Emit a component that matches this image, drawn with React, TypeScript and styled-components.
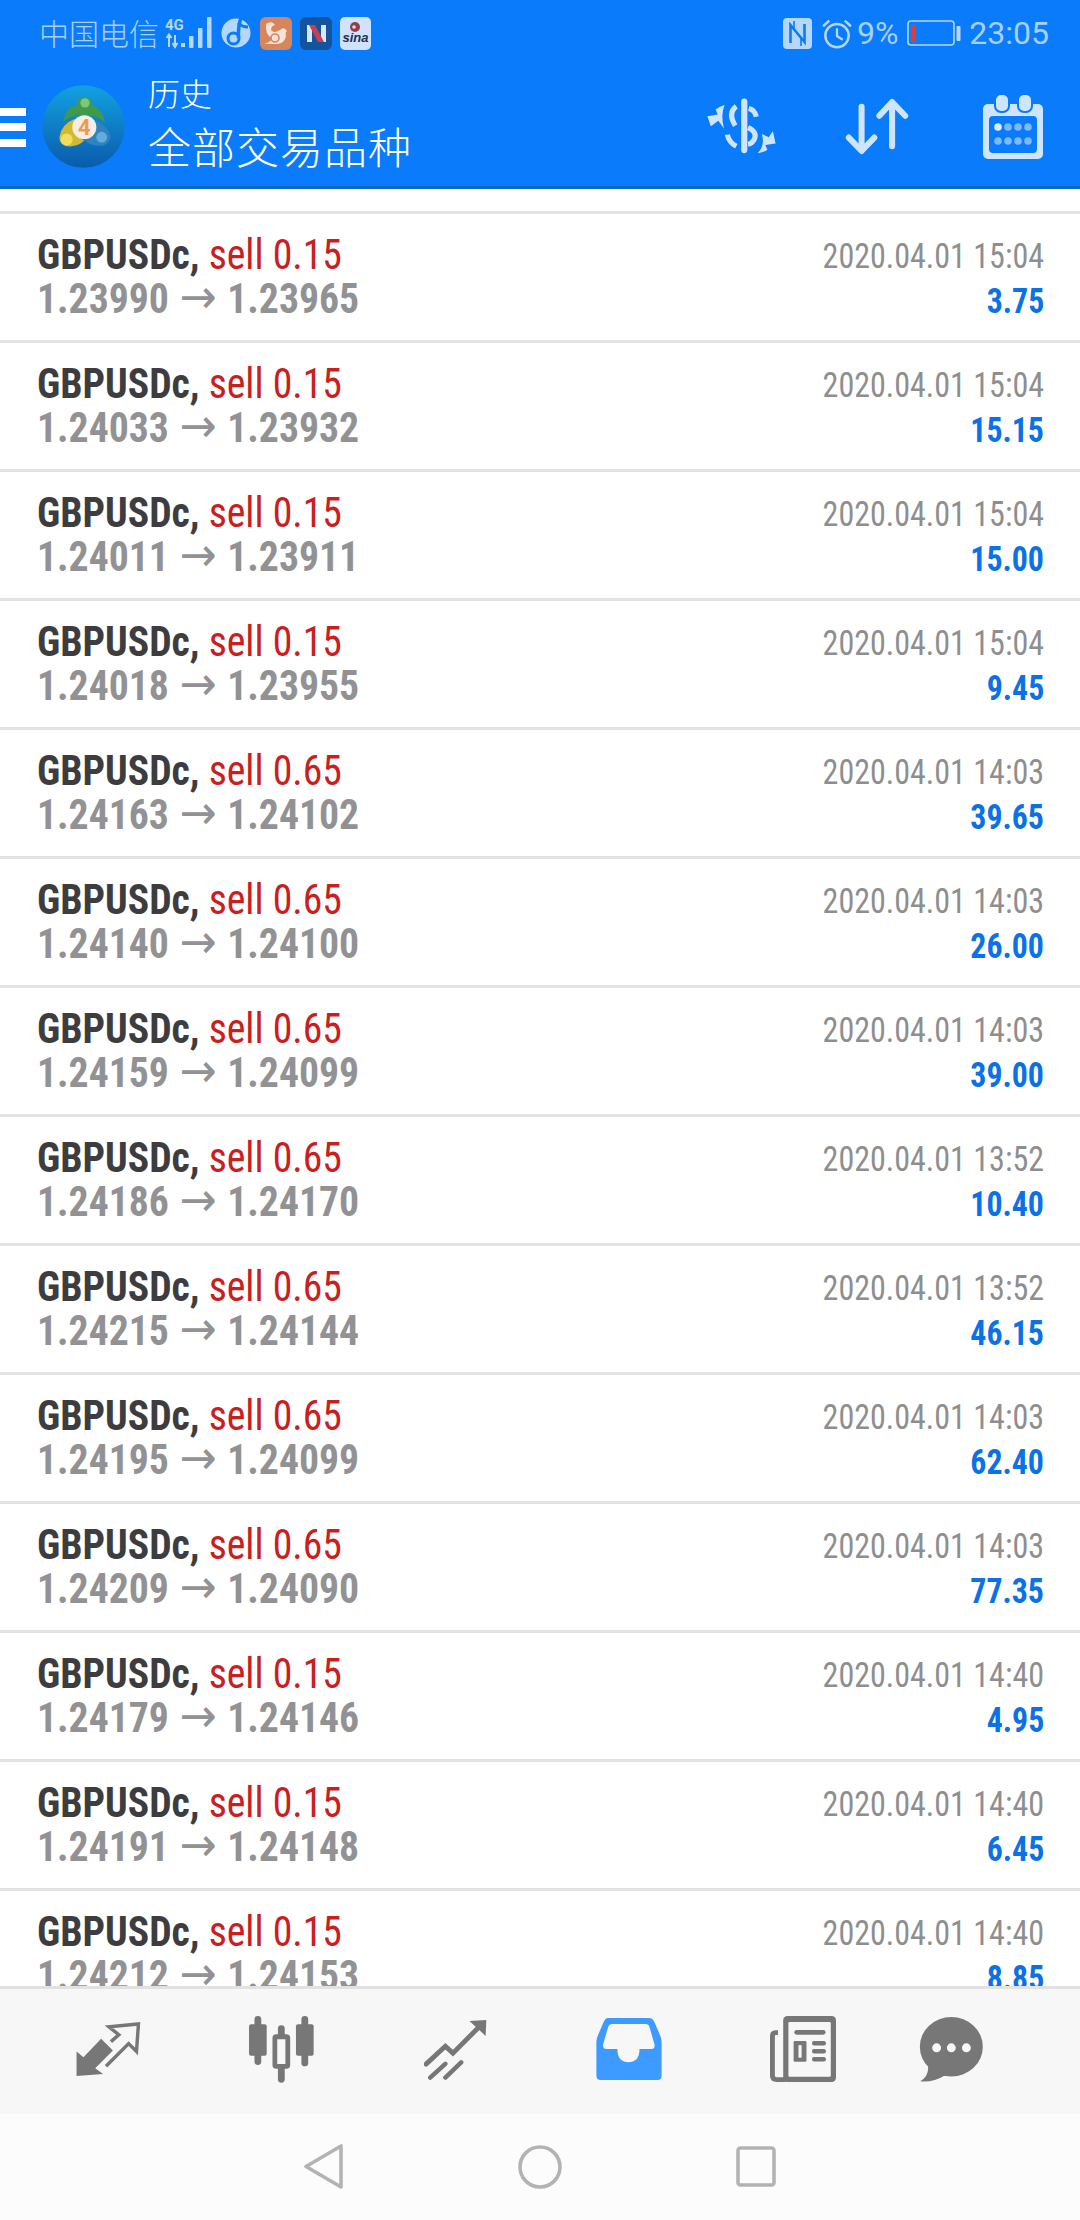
import React from "react";
import styled, { createGlobalStyle } from "styled-components";

const Global = createGlobalStyle`
  html, body { margin: 0; padding: 0; width: 1080px; height: 2220px; overflow: hidden; background: #fff; }
  * { box-sizing: border-box; }
`;

const Page = styled.div`
  width: 1080px;
  height: 2220px;
  display: flex;
  flex-direction: column;
  font-family: Roboto, "Noto Sans CJK SC", sans-serif;
  overflow: hidden;
`;

const TopArea = styled.header`
  height: 189px;
  flex: none;
  background: #0a7bfa;
  border-bottom: 3px solid #0b66c4;
  display: flex;
  flex-direction: column;
`;

const StatusBar = styled.div`
  height: 66px;
  display: flex;
  align-items: center;
  justify-content: space-between;
  padding: 0 31px 0 39px;
  color: #a8d0fd;
`;

const StatusGroup = styled.div`
  display: flex;
  align-items: center;
`;

const Carrier = styled.span`
  font-family: "Noto Sans CJK SC", sans-serif;
  font-size: 30px;
  font-weight: 300;
  line-height: 34px;
  margin-top: -3px;
`;

const StatusText = styled.span<{ $ml?: number }>`
  font-family: Roboto, sans-serif;
  font-size: 32px;
  line-height: 34px;
  margin-left: ${(p) => p.$ml ?? 0}px;
`;

const Icon = styled.svg<{ $ml?: number }>`
  display: block;
  flex: none;
  margin-left: ${(p) => p.$ml ?? 0}px;
`;

const Toolbar = styled.div`
  flex: 1;
  display: flex;
  align-items: center;
  padding-right: 37px;
`;

const Burger = styled.div`
  width: 26px;
  height: 39px;
  margin-top: 2px;
  display: flex;
  flex-direction: column;
  justify-content: space-between;
`;
const BurgerBar = styled.span`
  height: 8px;
  background: #fff;
`;

const Titles = styled.div`
  display: flex;
  flex-direction: column;
  margin-left: 23px;
  color: #fff;
  font-family: "Noto Sans CJK SC", sans-serif;
  font-weight: 300;
`;
const Title1 = styled.div`
  font-size: 32px;
  line-height: 42px;
  margin-top: -6px;
`;
const Title2 = styled.div`
  font-size: 43px;
  line-height: 60px;
  letter-spacing: 1px;
  margin-top: 2px;
`;
const ToolIcons = styled.div`
  margin-left: auto;
  display: flex;
  align-items: center;
`;

const List = styled.main`
  flex: 1;
  min-height: 0;
  overflow: hidden;
  background: #fff;
  padding-top: 22px;
`;

const Row = styled.div`
  height: 129px;
  border-top: 3px solid #e2e2e2;
  padding: 20px 36px 0 37px;
  display: flex;
  justify-content: space-between;
`;
const Col = styled.div<{ $right?: boolean }>`
  display: flex;
  flex-direction: column;
  align-items: ${(p) => (p.$right ? "flex-end" : "flex-start")};
  font-stretch: 75%;
`;
const LineOne = styled.div`
  font-size: 42px;
  line-height: 42px;
  white-space: nowrap;
  transform: scaleX(0.945);
  transform-origin: left center;
`;
const Symbol = styled.span`
  font-weight: 700;
  color: #3d3d3f;
`;
const Side = styled.span`
  color: #c9201f;
`;
const LineTwo = styled.div`
  font-size: 42px;
  line-height: 46px;
  font-weight: 700;
  color: #929295;
  white-space: nowrap;
  transform: scaleX(0.945);
  transform-origin: left center;
`;
const Arrow = styled.span`
  font-family: "DejaVu Sans", sans-serif;
  font-weight: 400;
  font-stretch: normal;
  font-size: 47px;
  line-height: 0;
  margin: 0 1.5px;
`;
const DateText = styled.div`
  font-size: 35px;
  line-height: 45px;
  color: #8e8e90;
  white-space: nowrap;
  transform: scaleX(0.915);
  transform-origin: right center;
`;
const Profit = styled.div`
  font-size: 35px;
  line-height: 45px;
  font-weight: 700;
  color: #0a72e6;
  transform: scaleX(0.91);
  transform-origin: right center;
`;

const TabBar = styled.nav`
  height: 128px;
  flex: none;
  background: #f7f7f7;
  border-top: 3px solid #e2e2e2;
  padding: 0 68px 5px 20px;
  display: grid;
  grid-template-columns: repeat(5, 174px) 1fr;
  align-items: center;
  justify-items: center;
`;
const SystemBar = styled.div`
  height: 106px;
  flex: none;
  background: #fcfcfc;
  padding: 0 304px 1px 303px;
  display: flex;
  align-items: center;
  justify-content: space-between;
`;

type R = [string, string, string, string, string];
const rows: R[] = [
  ["0.15", "1.23990", "1.23965", "15:04", "3.75"],
  ["0.15", "1.24033", "1.23932", "15:04", "15.15"],
  ["0.15", "1.24011", "1.23911", "15:04", "15.00"],
  ["0.15", "1.24018", "1.23955", "15:04", "9.45"],
  ["0.65", "1.24163", "1.24102", "14:03", "39.65"],
  ["0.65", "1.24140", "1.24100", "14:03", "26.00"],
  ["0.65", "1.24159", "1.24099", "14:03", "39.00"],
  ["0.65", "1.24186", "1.24170", "13:52", "10.40"],
  ["0.65", "1.24215", "1.24144", "13:52", "46.15"],
  ["0.65", "1.24195", "1.24099", "14:03", "62.40"],
  ["0.65", "1.24209", "1.24090", "14:03", "77.35"],
  ["0.15", "1.24179", "1.24146", "14:40", "4.95"],
  ["0.15", "1.24191", "1.24148", "14:40", "6.45"],
  ["0.15", "1.24212", "1.24153", "14:40", "8.85"],
];

const SB = "#b5d7fd";
const TI = "#cfe5fd";
const TG = "#777777";
const NV = "#b3b3b3";
const BLUE = "#0a7bfa";

const SignalIcon = () => (
  <Icon $ml={6} width={50} height={33} viewBox="0 0 50 33">
    <text x="0" y="13" fontFamily="Roboto, sans-serif" fontWeight="700" fontSize="15" fill={SB}>4G</text>
    <path d="M4 30V18M1.5 21L4 17.5L6.5 21M10 18v11M7.5 26L10 30L12.5 26" stroke={SB} strokeWidth="2" fill="none" />
    <rect x="16" y="26" width="4" height="4" fill={SB} />
    <rect x="24" y="19" width="4.5" height="12" rx="1" fill={SB} />
    <rect x="33" y="11" width="4.5" height="20" rx="1" fill={SB} />
    <rect x="42" y="0" width="4.5" height="31" rx="1" fill={SB} />
  </Icon>
);

const NoteIcon = () => (
  <Icon $ml={6} width={30} height={30} viewBox="0 0 30 30">
    <circle cx="15" cy="15" r="14.5" fill={SB} />
    <path d="M20 0 Q17 8 17.5 20" stroke={BLUE} strokeWidth="3.5" fill="none" />
    <circle cx="12.5" cy="20.5" r="5.5" fill="none" stroke={BLUE} strokeWidth="3" />
    <path d="M17 5 Q21 9 27 9" stroke={BLUE} strokeWidth="3" fill="none" />
  </Icon>
);

const UcIcon = () => (
  <Icon $ml={9} width={32} height={33} viewBox="0 0 32 33">
    <rect width="32" height="33" rx="6" fill="#d6855c" />
    <path d="M6 7 Q12 3 15 8 Q11 9 11 13 Q14 17 20 13 Q24 9 27 14 Q25 15 26 19 Q25 26 17 27 H5 Q12 24 12 21 Q5 18 6 7Z" fill="#f6e3d6" />
    <circle cx="15" cy="21" r="4" fill="none" stroke="#d6855c" strokeWidth="1.6" />
  </Icon>
);

const XIcon = () => (
  <Icon $ml={8} width={32} height={33} viewBox="0 0 32 33">
    <rect width="32" height="33" rx="6" fill="#14549e" />
    <path d="M7 8H12V25H7Z" fill="#dbe8fb" />
    <path d="M21 8H26V25H21Z" fill="#dbe8fb" />
    <path d="M9 8H15L24 25H18Z" fill="#c9414c" />
  </Icon>
);

const SinaIcon = () => (
  <Icon $ml={8} width={31} height={33} viewBox="0 0 31 33">
    <rect width="31" height="33" rx="5" fill="#cfe3fb" />
    <circle cx="15" cy="10" r="5" fill="#9a3b4a" />
    <circle cx="14" cy="10" r="1.8" fill="#cfe3fb" />
    <text x="15.5" y="25" textAnchor="middle" fontFamily="'Liberation Sans', sans-serif" fontStyle="italic" fontWeight="700" fontSize="13" fill="#23304f">sina</text>
  </Icon>
);

const NfcIcon = () => (
  <Icon width={29} height={31} viewBox="0 0 29 31">
    <rect width="29" height="31" rx="4" fill={SB} />
    <path d="M7.5 25V7L21.5 24V6" stroke={BLUE} strokeWidth="2.6" fill="none" />
    <path d="M11 3V11M18 20V28" stroke={BLUE} strokeWidth="1.6" />
  </Icon>
);

const AlarmIcon = () => (
  <Icon $ml={10} width={30} height={31} viewBox="0 0 29 30">
    <circle cx="14.5" cy="17" r="11.3" fill="none" stroke={SB} strokeWidth="2.4" />
    <path d="M14.5 10V17.5L20 21" fill="none" stroke={SB} strokeWidth="2.2" />
    <path d="M1 8L7 2.5M28 8L22 2.5" stroke={SB} strokeWidth="2.4" />
  </Icon>
);

const BatteryIcon = () => (
  <Icon $ml={9} width={54} height={26} viewBox="0 0 54 26">
    <rect x="1" y="1" width="46" height="24" rx="3" fill="none" stroke={SB} strokeWidth="1.6" />
    <rect x="4" y="5" width="5" height="17" fill="#e53a32" />
    <rect x="49.5" y="6" width="4" height="15" rx="1" fill={SB} />
  </Icon>
);

const Logo = () => (
  <Icon $ml={16} width={83} height={83} viewBox="-39 -31.5 249 249">
    <defs>
      <linearGradient id="logoBg" x1="0" y1="0" x2="0" y2="1">
        <stop offset="0" stopColor="#12a1e2" />
        <stop offset="1" stopColor="#0a5bab" />
      </linearGradient>
    </defs>
    <circle cx="85.5" cy="93" r="124" fill="url(#logoBg)" />
    <path d="M25 78Q35 32 68 28Q60 8 88 6Q116 8 108 28Q140 35 150 82Q125 55 88 62Q55 55 25 78Z" fill="#3f9a4c" />
    <circle cx="90" cy="22" r="14" fill="#7cc878" />
    <path d="M60 70Q20 85 13 125Q13 152 45 153Q72 151 88 135Q60 125 55 100Z" fill="#d2b935" />
    <circle cx="35" cy="132" r="18" fill="#f1df5c" />
    <path d="M120 75Q160 90 167 125Q160 152 130 151Q105 149 90 135Q120 125 122 100Z" fill="#2f83bf" />
    <circle cx="140" cy="125" r="16" fill="#62aedb" />
    <circle cx="88" cy="95" r="36" fill="#f6eee2" />
    <text x="88" y="119" textAnchor="middle" fontFamily="Roboto, sans-serif" fontWeight="700" fontSize="66" fill="#ef9a4b">4</text>
  </Icon>
);

const DollarIcon = () => (
  <Icon width={71} height={57} viewBox="478 292 206 165">
    <path d="M589 302V443" stroke={TI} strokeWidth="18" strokeLinecap="round" />
    <path d="M602 322Q620 326 624 346" stroke={TI} strokeWidth="15" fill="none" />
    <path d="M566 316Q540 335 563 372" stroke={TI} strokeWidth="15" fill="none" />
    <path d="M600 378Q628 390 618 412Q612 424 600 426" stroke={TI} strokeWidth="15" fill="none" />
    <path d="M540 398Q544 420 566 432" stroke={TI} strokeWidth="15" fill="none" />
    <path d="M482 345L512 340L506 325Q518 316 532 312Q520 340 530 380L514 358L492 374Z" fill={TI} />
    <path d="M680 424L650 428L656 442Q644 450 628 452Q650 430 640 396L660 406L672 388Z" fill={TI} />
  </Icon>
);

const SortIcon = () => (
  <Icon $ml={67} width={66} height={57} viewBox="878 292 196 170">
    <g stroke={TI} strokeWidth="18" strokeLinecap="round" strokeLinejoin="round" fill="none">
      <path d="M930 318V448M892 410L930 450L968 410" />
      <path d="M1021 306V436M983 345L1021 304L1060 345" />
    </g>
  </Icon>
);

const CalendarIcon = () => (
  <Icon $ml={73} width={60} height={65} viewBox="0 0 60 65">
    <rect x="0" y="10" width="60" height="55" rx="5" fill={TI} />
    <rect x="12" y="0" width="14" height="18" rx="6" fill={TI} stroke={BLUE} strokeWidth="2" />
    <rect x="35" y="0" width="14" height="18" rx="6" fill={TI} stroke={BLUE} strokeWidth="2" />
    <rect x="6" y="22" width="48" height="37" rx="4" fill={BLUE} />
    {[15, 25, 35, 45].map((x, i) => (
      <React.Fragment key={x}>
        <circle cx={x} cy="33" r="3.8" fill={i === 0 ? "#dcecfe" : "#7fb8fc"} />
        <circle cx={x} cy="47" r="3.8" fill="#7fb8fc" />
      </React.Fragment>
    ))}
  </Icon>
);

const ExposureIcon = () => (
  <Icon width={67} height={56} viewBox="13 15 67 57">
    <path d="M15 71L15 46L22 52L40 33L52 45L34 63L42 69Z" fill={TG} />
    <path d="M50 36L58 29L48 21L78 18L76 46L68 38L45 61" fill="none" stroke={TG} strokeWidth="3.5" strokeLinejoin="miter" />
  </Icon>
);

const CandleIcon = () => (
  <Icon width={69} height={67} viewBox="715 168 197 197">
    <g stroke={TG} strokeLinecap="round" strokeWidth="20">
      <path d="M744 178V302" />
      <path d="M813 205V354" />
      <path d="M882 178V306" />
    </g>
    <rect x="718" y="192" width="52" height="93" rx="6" fill={TG} />
    <rect x="794" y="229" width="38" height="87" rx="4" fill="#f7f7f7" stroke={TG} strokeWidth="14" />
    <rect x="856" y="192" width="52" height="93" rx="6" fill={TG} />
  </Icon>
);

const TrendIcon = () => (
  <Icon width={63} height={61} viewBox="1226 175 183 177">
    <path d="M1232 306L1288 254L1310 274L1388 196" stroke={TG} strokeWidth="14" fill="none" strokeLinecap="round" />
    <path d="M1407 178L1358 181L1405 224Z" fill={TG} />
    <path d="M1244 345L1288 305M1288 345L1334 301" stroke={TG} strokeWidth="13" strokeLinecap="round" />
  </Icon>
);

const InboxIcon = () => (
  <Icon width={66} height={62} viewBox="162 178 183 174">
    <path d="M195 178H310Q320 178 325 190L340 225Q345 235 345 245V340Q345 352 333 352H174Q162 352 162 340V245Q162 235 167 225L182 190Q187 178 195 178Z" fill="#3d9bff" />
    <path d="M205 195H300Q308 195 311 203L325 252Q327 265 316 265H283Q283 302 252 302Q221 302 221 265H190Q179 265 181 252L195 203Q198 195 205 195Z" fill="#f7f7f7" />
  </Icon>
);

const NewsIcon = () => (
  <Icon width={66} height={66} viewBox="665 168 190 190">
    <rect x="703" y="168" width="152" height="190" rx="12" fill={TG} />
    <rect x="718" y="185" width="122" height="158" rx="4" fill="#f7f7f7" />
    <path d="M688 216H682Q672 216 672 226V340Q672 351 684 351H710" stroke={TG} strokeWidth="14" fill="none" />
    <rect x="735" y="208" width="90" height="14" rx="7" fill={TG} />
    <rect x="733" y="240" width="37" height="60" rx="4" fill={TG} />
    <rect x="747" y="252" width="9" height="36" fill="#f7f7f7" />
    <rect x="786" y="240" width="40" height="13" rx="6" fill={TG} />
    <rect x="786" y="263" width="40" height="13" rx="6" fill={TG} />
    <rect x="786" y="286" width="40" height="13" rx="6" fill={TG} />
  </Icon>
);

const ChatIcon = () => (
  <Icon width={65} height={65} viewBox="1101 168 185 190">
    <ellipse cx="1193" cy="255" rx="92" ry="87" fill={TG} />
    <path d="M1125 310Q1128 340 1102 356Q1140 360 1175 338Z" fill={TG} />
    <circle cx="1150" cy="258" r="13" fill="#f7f7f7" />
    <circle cx="1193" cy="258" r="13" fill="#f7f7f7" />
    <circle cx="1237" cy="258" r="13" fill="#f7f7f7" />
  </Icon>
);

const NavBack = () => (
  <Icon width={41} height={47} viewBox="0 0 41 47">
    <path d="M38 3V44L3 23.5Z" fill="none" stroke={NV} strokeWidth="3.6" strokeLinejoin="round" />
  </Icon>
);
const NavHome = () => (
  <Icon width={44} height={44} viewBox="0 0 44 44">
    <circle cx="22" cy="22" r="20" fill="none" stroke={NV} strokeWidth="3.6" />
  </Icon>
);
const NavRecent = () => (
  <Icon width={40} height={41} viewBox="0 0 40 41">
    <rect x="2" y="2" width="36" height="37" rx="2.5" fill="none" stroke={NV} strokeWidth="3.6" />
  </Icon>
);

export default function App() {
  return (
    <Page>
      <Global />
      <TopArea>
        <StatusBar>
          <StatusGroup>
            <Carrier>中国电信</Carrier>
            <SignalIcon />
            <NoteIcon />
            <UcIcon />
            <XIcon />
            <SinaIcon />
          </StatusGroup>
          <StatusGroup>
            <NfcIcon />
            <AlarmIcon />
            <StatusText $ml={5}>9%</StatusText>
            <BatteryIcon />
            <StatusText $ml={8}>23:05</StatusText>
          </StatusGroup>
        </StatusBar>
        <Toolbar>
          <Burger>
            <BurgerBar />
            <BurgerBar />
            <BurgerBar />
          </Burger>
          <Logo />
          <Titles>
            <Title1>历史</Title1>
            <Title2>全部交易品种</Title2>
          </Titles>
          <ToolIcons>
            <DollarIcon />
            <SortIcon />
            <CalendarIcon />
          </ToolIcons>
        </Toolbar>
      </TopArea>
      <List>
        {rows.map((r, i) => (
          <Row key={i}>
            <Col>
              <LineOne>
                <Symbol>GBPUSDc,</Symbol> <Side>sell {r[0]}</Side>
              </LineOne>
              <LineTwo>
                {r[1]} <Arrow>→</Arrow> {r[2]}
              </LineTwo>
            </Col>
            <Col $right>
              <DateText>2020.04.01 {r[3]}</DateText>
              <Profit>{r[4]}</Profit>
            </Col>
          </Row>
        ))}
      </List>
      <TabBar>
        <ExposureIcon />
        <CandleIcon />
        <TrendIcon />
        <InboxIcon />
        <NewsIcon />
        <ChatIcon />
      </TabBar>
      <SystemBar>
        <NavBack />
        <NavHome />
        <NavRecent />
      </SystemBar>
    </Page>
  );
}
